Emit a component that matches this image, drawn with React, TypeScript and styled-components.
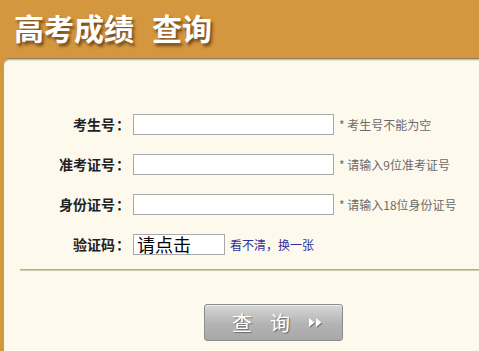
import React from "react";
import styled, { createGlobalStyle } from "styled-components";

const GlobalStyle = createGlobalStyle`
  html, body {
    margin: 0;
    padding: 0;
    background: #d4963f;
    overflow: hidden;
  }
  body {
    font-family: "Noto Sans CJK SC", "Noto Sans", sans-serif;
  }
`;

const Page = styled.div`
  width: 479px;
  height: 351px;
  overflow: hidden;
  background: #d4963f;
`;

const Header = styled.header`
  height: 58px;
  display: flex;
  align-items: center;
  padding-left: 14px;
`;

const Title = styled.h1`
  margin: 0;
  margin-top: -4px;
  display: flex;
  gap: 18px;
  font-size: 30px;
  font-weight: 700;
  line-height: 1;
  color: #fff;
  text-shadow: 2px 3px 3px rgba(70, 40, 10, 0.7);
`;

const Panel = styled.main`
  margin-left: 4px;
  width: 600px;
  height: 320px;
  background: #fdf9ed;
  border-top: 1px solid #8e7c5e;
  box-shadow: inset 0 1px 0 #cfc3a5, inset 0 2px 0 #ebe3cc;
  border-top-left-radius: 6px;
  padding-top: 45px;
  box-sizing: border-box;
`;

const Form = styled.form`
  display: grid;
  grid-template-columns: 126px auto;
  grid-auto-rows: 40px;
  column-gap: 3px;
  align-items: center;
`;

const Label = styled.label`
  text-align: right;
  font-size: 14px;
  font-weight: 700;
  color: #222;
  white-space: nowrap;
`;

const Colon = styled.span`
  margin-left: 1px;
`;

const Field = styled.div`
  display: flex;
  align-items: center;
  gap: 5px;
`;

const TextInput = styled.input<{ $w: number }>`
  width: ${(p) => p.$w}px;
  height: 21px;
  box-sizing: border-box;
  border: 1px solid #a9a9a9;
  background: #fff;
  padding: 0 3px;
  margin: 0;
  font-family: "Noto Sans CJK SC", sans-serif;
  font-size: 18px;
  color: #000;
  outline: none;
  &::placeholder {
    color: #000;
  }
`;

const Hint = styled.span`
  font-size: 12px;
  color: #6a6a6a;
`;

const Refresh = styled.a`
  font-size: 12px;
  color: #30309c;
  text-decoration: none;
`;

const Divider = styled.hr`
  margin: 5px 0 0 16px;
  border: none;
  height: 2px;
  background: #d2cbb0;
  border-top: 1px solid #b5ad92;
  box-sizing: border-box;
`;

const ButtonRow = styled.div`
  padding-left: 200px;
  padding-top: 33px;
`;

const SubmitButton = styled.button`
  width: 139px;
  height: 37px;
  display: flex;
  align-items: center;
  gap: 18px;
  border: 1px solid #8d8d8d;
  border-radius: 3px;
  background: linear-gradient(#d7d7d7, #b3b3b3 55%, #a8a8a8);
  box-shadow: inset 0 1px 0 #eee;
  color: #fff;
  font-family: "Noto Sans CJK SC", sans-serif;
  font-size: 20px;
  line-height: 1;
  text-shadow: 1px 1px 1px rgba(60, 60, 60, 0.6);
  padding: 0 0 0 27px;
  cursor: pointer;
`;

const Arrows = () => (
  <svg width="15" height="11" viewBox="0 0 15 11" style={{ filter: "drop-shadow(1px 1px 0 rgba(60,60,60,0.5))" }}>
    <polygon points="1,1 6.5,5.5 1,10" fill="#fff" />
    <polygon points="8,1 13.5,5.5 8,10" fill="#fff" />
  </svg>
);

const rows = [
  { label: "考生号", hint: "* 考生号不能为空" },
  { label: "准考证号", hint: "* 请输入9位准考证号" },
  { label: "身份证号", hint: "* 请输入18位身份证号" },
];

export default function App() {
  return (
    <Page>
      <GlobalStyle />
      <Header>
        <Title>
          <span>高考成绩</span>
          <span>查询</span>
        </Title>
      </Header>
      <Panel>
        <Form onSubmit={(e) => e.preventDefault()}>
          {rows.map((r) => (
            <React.Fragment key={r.label}>
              <Label>
                {r.label}
                <Colon>：</Colon>
              </Label>
              <Field>
                <TextInput $w={201} type="text" />
                <Hint>{r.hint}</Hint>
              </Field>
            </React.Fragment>
          ))}
          <Label>
            验证码<Colon>：</Colon>
          </Label>
          <Field>
            <TextInput $w={92} type="text" placeholder="请点击" />
            <Refresh href="#">看不清，换一张</Refresh>
          </Field>
        </Form>
        <Divider />
        <ButtonRow>
          <SubmitButton type="submit">
            <span>查</span>
            <span>询</span>
            <Arrows />
          </SubmitButton>
        </ButtonRow>
      </Panel>
    </Page>
  );
}
